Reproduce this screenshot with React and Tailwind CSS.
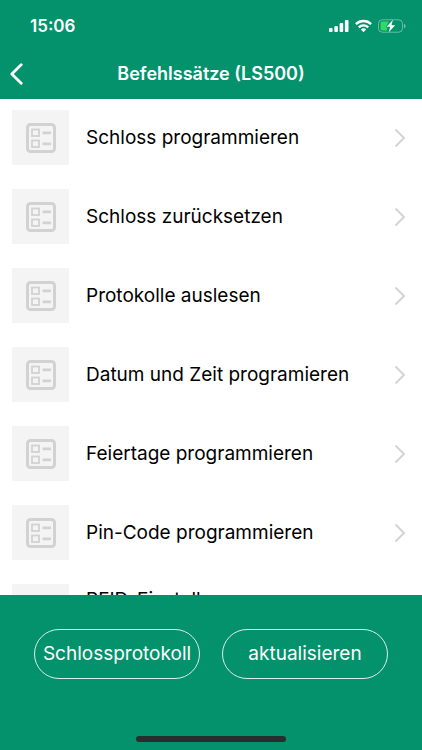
import React from 'react'

const commands = [
  'Schloss programmieren',
  'Schloss zurücksetzen',
  'Protokolle auslesen',
  'Datum und Zeit programieren',
  'Feiertage programmieren',
  'Pin-Code programmieren',
  'RFID-Einstellungen programmieren',
]

function StatusBar(){
  return (
    <div className="flex h-[52px] items-center justify-between pl-[30px] pr-4">
      <span className="text-[17px] font-semibold leading-6">15:06</span>
      <div className="flex items-center gap-[6px]">
        {/* signal */}
        <svg width="20" height="14" viewBox="0 0 20 14" fill="currentColor">
          <rect x="0" y="9" width="3.6" height="4" rx="1"/>
          <rect x="5.3" y="7" width="3.6" height="6" rx="1"/>
          <rect x="10.6" y="4" width="3.6" height="9" rx="1"/>
          <rect x="15.9" y="1" width="3.6" height="12" rx="1"/>
        </svg>
        {/* wifi */}
        <svg width="17" height="14" viewBox="0 0 17 14" fill="none" stroke="currentColor" strokeWidth="2.4">
          <path d="M0.9 5.1a10.8 10.8 0 0 1 15.2 0"/>
          <path d="M3.8 8.3a6.7 6.7 0 0 1 9.4 0"/>
          <path d="M8.5 13.2L5.9 10.5a3.7 3.7 0 0 1 5.2 0z" fill="currentColor" stroke="none"/>
        </svg>
        {/* battery, charging */}
        <svg width="28" height="14" viewBox="0 0 28 14">
          <rect x="0.5" y="0.8" width="24" height="12.4" rx="3.8" fill="none" stroke="#fff" strokeOpacity="0.4"/>
          <path d="M26 5v4.2c1-.4 1.6-1.2 1.6-2.1S27 5.4 26 5z" fill="#fff" fillOpacity="0.45"/>
          <path d="M4.5 2.6h6.5L7.6 8.2H9.5L8.8 11.4H4.5a2 2 0 0 1-2-2V4.6a2 2 0 0 1 2-2z" fill="#35d860"/>
          <path d="M14.9 0.7L8.5 7.7h3.7L10.7 13.3L17.2 6.3h-3.7z" fill="#fff"/>
        </svg>
      </div>
    </div>
  )
}

function CommandRow({ label }){
  return (
    <li>
      <button className="flex h-[79px] w-full items-center pl-3 pr-4 text-left">
        <span className="flex h-[55px] w-[57px] shrink-0 items-center justify-center bg-[#f4f4f4]">
          <svg width="30" height="30" viewBox="0 0 30 30" fill="none" stroke="#d2d2d2">
            <rect x="1.5" y="1.5" width="27" height="27" rx="3" strokeWidth="3"/>
            <rect x="6" y="6.5" width="7" height="6.5" strokeWidth="1.8"/>
            <rect x="6" y="17.5" width="7" height="6.5" strokeWidth="1.8"/>
            <path d="M16.500 9.800h8.500M16.500 20.800h8.500" strokeWidth="2.800"/>
          </svg>
        </span>
        <span className="mx-[17px] flex-1 text-[19px] leading-6 text-black">{label}</span>
        <svg className="shrink-0" width="12" height="20" viewBox="0 0 12 20" fill="none" stroke="#d4d4d4" strokeWidth="2">
          <path d="M1.5 1.5L10 10l-8.500 8.500"/>
        </svg>
      </button>
    </li>
  )
}

export default function App(){
  return (
    <div className="flex h-screen flex-col bg-white font-[Inter,sans-serif]">
      <header className="z-10 shrink-0 bg-[#03926b] text-white">
        <StatusBar/>
        <div className="grid h-[47px] grid-cols-[40px_1fr_40px] items-center pb-1">
          <button aria-label="Zurück" className="pl-[10px]">
            <svg width="13" height="22" viewBox="0 0 13 22" fill="none" stroke="currentColor" strokeWidth="2.8" strokeLinecap="round" strokeLinejoin="round">
              <path d="M11.2 1.8L1.8 11l9.400 9.200"/>
            </svg>
          </button>
          <h1 className="text-center text-[18px] font-semibold leading-6">Befehlssätze (LS500)</h1>
        </div>
      </header>

      <main className="min-h-0 flex-1 overflow-hidden">
        <ul className="-mt-px">
          {commands.map(c => <CommandRow key={c} label={c}/>)}
        </ul>
      </main>

      <footer className="flex shrink-0 flex-col bg-[#03926b] px-[34px] pt-[34px] pb-2 text-white">
        <div className="grid grid-cols-2 gap-[22px]">
          <button className="h-[50px] whitespace-nowrap rounded-full border border-white/85 text-[19px] leading-6">Schlossprotokoll</button>
          <button className="h-[50px] whitespace-nowrap rounded-full border border-white/85 text-[19px] leading-6">aktualisieren</button>
        </div>
        {/* home indicator */}
        <div className="mx-auto mt-[57px] h-[6px] w-[150px] rounded-full bg-[#2a2d2e]"/>
      </footer>
    </div>
  )
}
